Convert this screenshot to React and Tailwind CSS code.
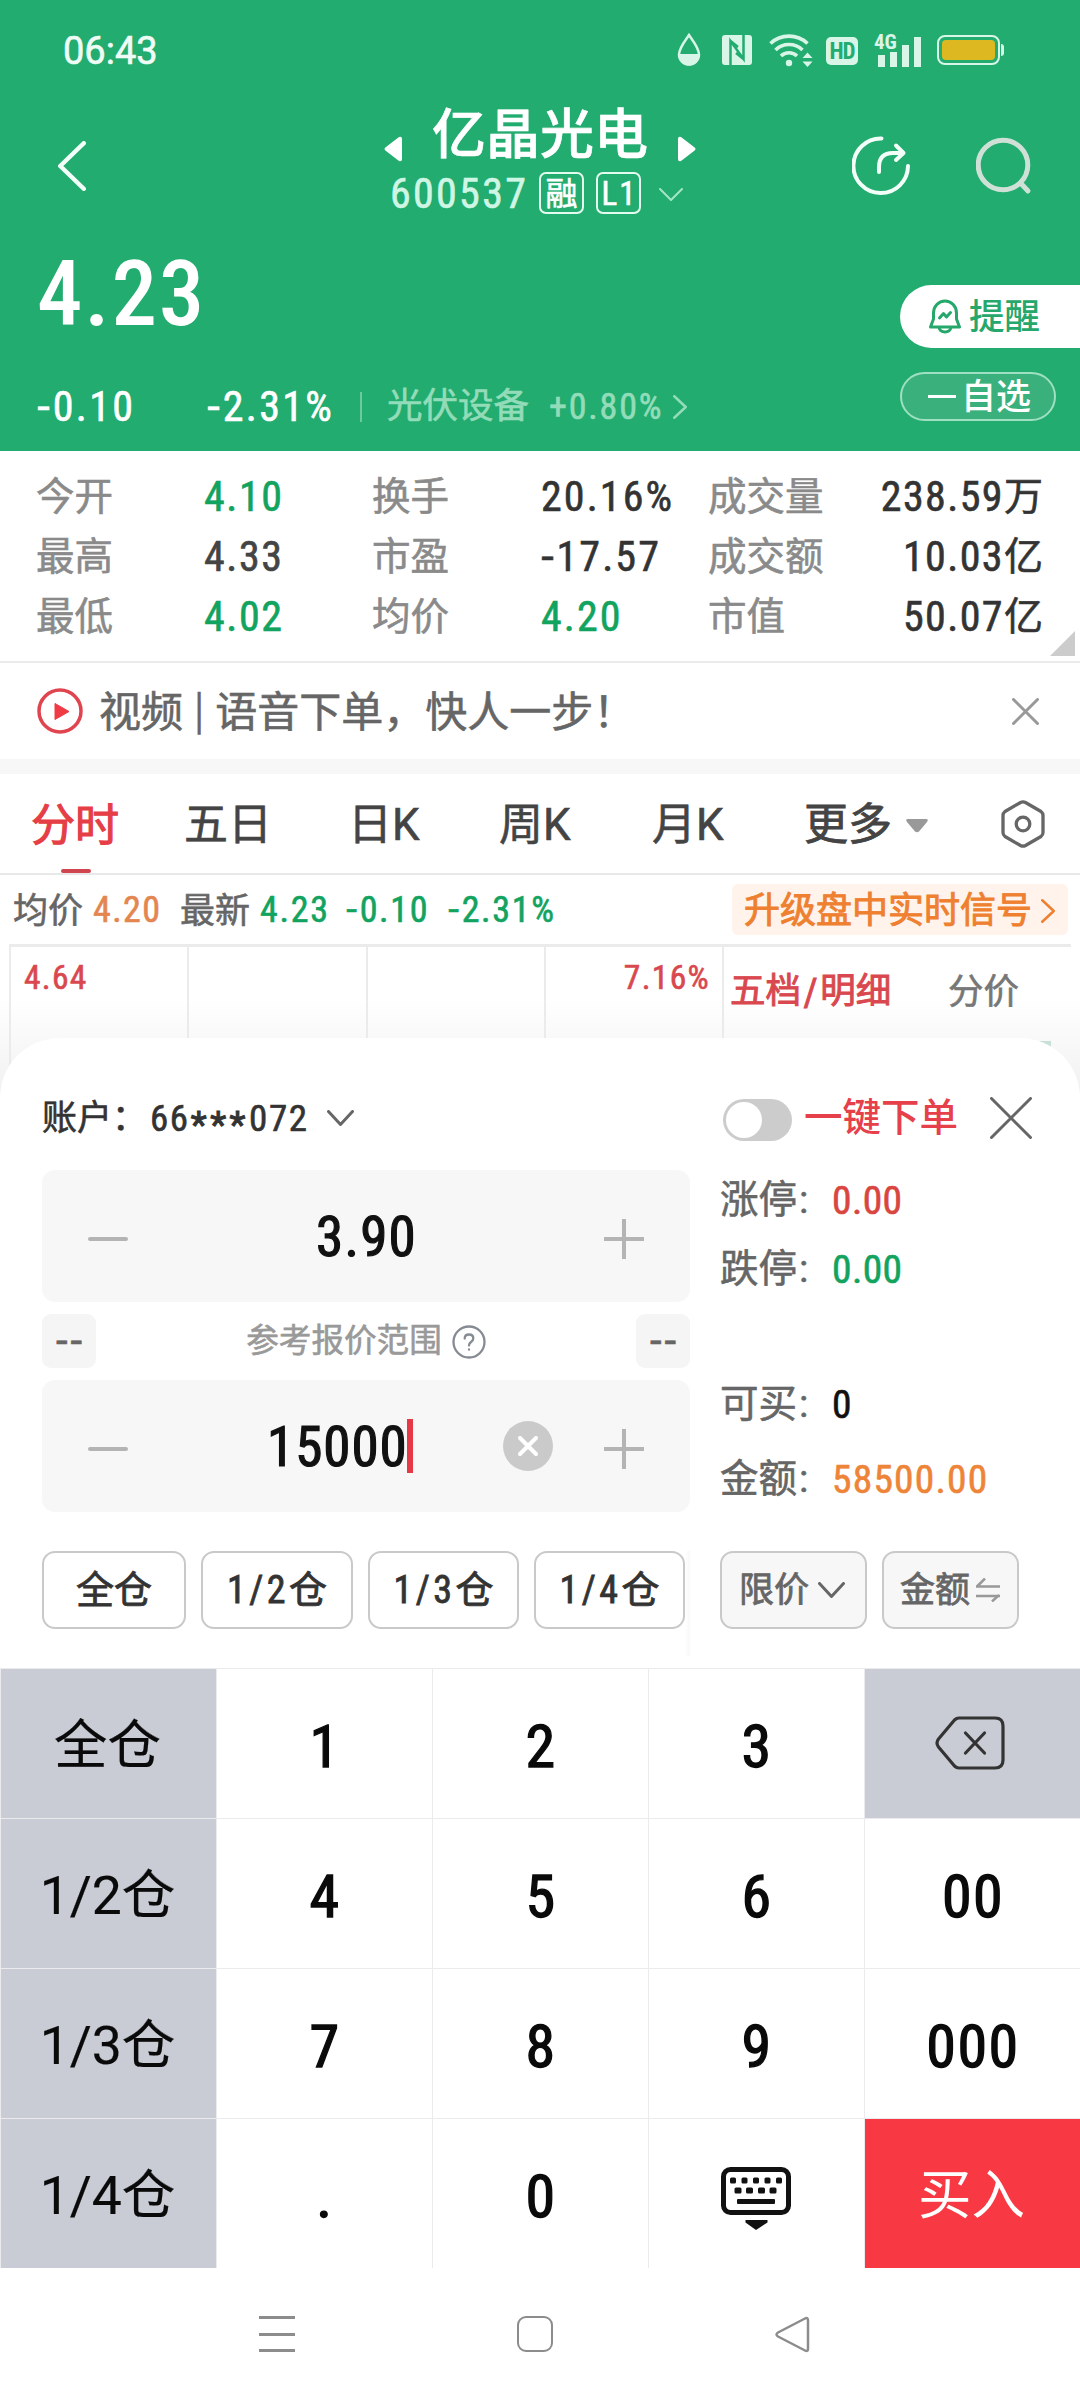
import React from "react";

const BASE = "font-['Roboto','Noto_Sans_CJK_SC',sans-serif] [font-stretch:85%] [-webkit-text-stroke:0.6px]";

function Chevron({ dir = "down", w, h, stroke, sw = 3, className = "" }) {
  const d = {
    down: `M${sw / 2} ${sw / 2}L${w / 2} ${h - sw / 2}L${w - sw / 2} ${sw / 2}`,
    right: `M${sw / 2} ${sw / 2}L${w - sw / 2} ${h / 2}L${sw / 2} ${h - sw / 2}`,
    left: `M${w - sw / 2} ${sw / 2}L${sw / 2} ${h / 2}L${w - sw / 2} ${h - sw / 2}`,
  }[dir];
  return (
    <svg className={`shrink-0 ${className}`} width={w} height={h} fill="none" stroke={stroke} strokeWidth={sw} strokeLinecap="round" strokeLinejoin="round">
      <path d={d} />
    </svg>
  );
}

function Cross({ size, stroke, sw, className = "" }) {
  return (
    <svg className={`shrink-0 ${className}`} width={size} height={size} stroke={stroke} strokeWidth={sw} strokeLinecap="round">
      <path d={`M${sw / 2} ${sw / 2}L${size - sw / 2} ${size - sw / 2}M${size - sw / 2} ${sw / 2}L${sw / 2} ${size - sw / 2}`} />
    </svg>
  );
}

// Wide leading minus followed by the digits of a negative figure.
function Signed({ children }) {
  if (children[0] !== "-") return children;
  return <><span className="mr-[3px] inline-block origin-left scale-x-[1.25]">-</span>{children.slice(1)}</>;
}

function StatusBar() {
  return (
    <div className="flex h-[100px] items-center pl-[63px] pr-[76px] text-[#d8f5e8]">
      <span className="pt-[2px] text-[38px] leading-none text-[#effcf6] [font-stretch:100%]">06:43</span>
      <svg className="ml-auto" width="24" height="34" viewBox="0 0 24 34">
        <path d="M12 2C8 8 2 15 2 21.500A10 10 0 0 0 22 21.500C22 15 16 8 12 2Z" fill="none" stroke="currentColor" strokeWidth="2.500" />
        <path d="M1.500 21H22.500A10.500 11.500 0 0 1 1.500 21Z" fill="currentColor" />
      </svg>
      <svg className="ml-[21px]" width="30" height="30" viewBox="0 0 30 30">
        <rect width="30" height="30" rx="3" fill="currentColor" />
        <path d="M8.500 30V6L21.500 24V0M8.500 6L16 12M21.500 24L14 18" fill="none" stroke="#22ac6f" strokeWidth="2.500" />
      </svg>
      <svg className="ml-[17px]" width="44" height="34" viewBox="0 0 44 34" fill="none" stroke="currentColor" strokeWidth="3.600">
        <path d="M1.500 10.500A27 27 0 0 1 38.500 10.500" />
        <path d="M6.500 17A19.500 19.500 0 0 1 33.500 17" />
        <path d="M12 23A11.500 11.500 0 0 1 28 23" />
        <circle cx="20" cy="30" r="3.200" fill="currentColor" stroke="none" />
        <path d="M33.500 25L38.500 19.500L43.500 25ZM33.500 28.500L38.500 34L43.500 28.500Z" fill="currentColor" stroke="none" />
      </svg>
      <div className="ml-[13px] mt-[2px] flex h-[28px] w-[32px] items-center justify-center rounded-[5px] bg-[#d8f5e8] pt-px text-[23px] font-bold leading-none tracking-[-1px] text-[#22ac6f] [-webkit-text-stroke:0]">HD</div>
      <div className="relative ml-[17px] flex h-[33px] w-[47px] items-end gap-[5.500px] pl-[3px]">
        <span className="absolute -left-[1px] -top-[2px] text-[21px] font-bold leading-none [-webkit-text-stroke:0]">4G</span>
        <i className="h-[12px] w-[6.500px] bg-current" />
        <i className="h-[15px] w-[6.500px] bg-current" />
        <i className="h-[22px] w-[6.500px] bg-current" />
        <i className="h-[30px] w-[6.500px] bg-current" />
      </div>
      <div className="ml-[15px] h-[30px] w-[63px] rounded-[8px] border-2 border-current p-[3px]">
        <div className="h-full w-full rounded-[4px] bg-[#deb820]" />
      </div>
      <i className="ml-px h-[12px] w-[3px] rounded-r-sm bg-current" />
    </div>
  );
}

function Header() {
  return (
    <header className="h-[451px] bg-[#22ac6f] text-white">
      <StatusBar />
      <div className="flex h-[132px]">
        <Chevron dir="left" w={28} h={50} sw={4.500} stroke="#f3fff9" className="ml-[58px] mt-[41px]" />
        <div className="ml-[298px] flex w-[312px] flex-col">
          <div className="flex h-[70px] items-center">
            <svg className="mt-[28px]" width="18" height="26"><path d="M2 11L15 1Q18 0 18 3V23Q18 26 15 25L2 15Q-1 13 2 11Z" fill="#fff" /></svg>
            <h1 className="ml-[30px] w-[216px] whitespace-nowrap pt-[2px] text-[54px] font-medium leading-none">亿晶光电</h1>
            <svg className="ml-[30px] mt-[28px]" width="18" height="26"><path d="M16 11L3 1Q0 0 0 3V23Q0 26 3 25L16 15Q19 13 16 11Z" fill="#fff" /></svg>
          </div>
          <div className="mt-[2px] flex h-[42px] items-center">
            <span className="ml-[6px] w-[149px] pt-[2px] text-[42px] leading-none tracking-[2.300px] text-[#cff6e4]">600537</span>
            <span className="flex h-[42px] w-[45px] items-center justify-center rounded-[7px] border-2 border-[#e4fbf0] pt-px text-[32px] leading-none">融</span>
            <span className="ml-[12px] flex h-[42px] w-[45px] items-center justify-center rounded-[7px] border-2 border-[#e4fbf0] pl-[2px] text-[33px] leading-none tracking-[2px]">L1</span>
            <Chevron w={24} h={13} sw={2} stroke="#a5e5c7" className="ml-[18px] mt-0.5" />
          </div>
        </div>
        <svg className="ml-[156px] mt-[36px]" width="60" height="60" fill="none" stroke="#f3fff9" strokeWidth="4" strokeLinecap="round" strokeLinejoin="round">
          <path d="M29.500 2.500A27.300 27.300 0 1 0 56 30" />
          <path d="M27 36V31Q27 17 41 17H50M44 9.500L51.500 17L44 24" />
        </svg>
        <svg className="ml-[64px] mt-[37px]" width="56" height="58" fill="none" stroke="#cfe0d6" strokeWidth="5" strokeLinecap="round">
          <circle cx="27" cy="28" r="24.800" />
          <path d="M45 46.500L52 54" />
        </svg>
      </div>
      <div className="flex h-[219px]">
        <div className="w-[900px] pl-[37px]">
          <div className="flex h-[122px] items-center pt-[3px] text-[91px] font-medium leading-none tracking-[1.800px] [-webkit-text-stroke:0]">4.23</div>
          <div className="mt-[22px] flex h-[60px] items-center pt-[2px] text-[42px] leading-none tracking-[2.300px]">
            <span className="w-[170px]"><Signed>-0.10</Signed></span>
            <span className="w-[153px]"><Signed>-2.31%</Signed></span>
            <i className="h-[30px] w-[2px] bg-[#6cc9a0]" />
            <span className="ml-[25px] w-[162px] text-[35.500px] tracking-normal text-[#93dcb9]">光伏设备</span>
            <span className="text-[36px] tracking-[1.800px] text-[#93dcb9]">+0.80%</span>
            <Chevron dir="right" w={14} h={24} sw={2.500} stroke="#93dcb9" className="ml-auto mr-[213px]" />
          </div>
        </div>
        <div className="flex w-[180px] flex-col pt-[53px]">
          <div className="flex h-[63px] items-center rounded-l-full bg-white pl-[29px] text-[#26a76b]">
            <svg width="32" height="35" fill="none" stroke="currentColor" strokeWidth="3" strokeLinejoin="round" strokeLinecap="round">
              <path d="M4.500 20V14A11.500 12 0 0 1 27.500 14V20L30.500 28H1.500Z" />
              <path d="M10 28.500Q11 33 16 33Q21 33 22 28.500M10.500 19L14.500 14.500L17.500 18L21.500 13.500" />
            </svg>
            <span className="ml-[8px] pt-[2px] text-[35.500px] font-medium leading-none [-webkit-text-stroke:0]">提醒</span>
          </div>
          <div className="mt-[24px] flex h-[49px] w-[156px] items-center rounded-full border-2 border-[#9fdfc2] bg-[#3ab17c] pl-[26px]">
            <i className="h-[3.500px] w-[28px] bg-white" />
            <span className="ml-[5px] pt-[2px] text-[35px] font-medium leading-none [-webkit-text-stroke:0]">自选</span>
          </div>
        </div>
      </div>
    </header>
  );
}

const STATS = [
  ["今开", "4.10", "text-[#12a35f]", "换手", "20.16%", "text-[#333]", "成交量", "238.59万"],
  ["最高", "4.33", "text-[#444]", "市盈", "-17.57", "text-[#333]", "成交额", "10.03亿"],
  ["最低", "4.02", "text-[#12a35f]", "均价", "4.20", "text-[#12a35f]", "市值", "50.07亿"],
];

function Stats() {
  return (
    <section className="relative h-[212px] border-b-2 border-[#ebebeb] pt-[16px]">
      {STATS.map((r) => (
        <div key={r[0]} className="flex h-[60px] items-center pl-[36px] pr-[37px] text-[38.500px] leading-none">
          <span className="w-[168px] text-[#8a8a8a]">{r[0]}</span>
          <span className={`w-[168px] text-[42px] tracking-[1.600px] ${r[2]}`}>{r[1]}</span>
          <span className="w-[169px] text-[#8a8a8a]">{r[3]}</span>
          <span className={`w-[167px] text-[42px] tracking-[2.100px] ${r[5]}`}><Signed>{r[4]}</Signed></span>
          <span className="text-[#8a8a8a]">{r[6]}</span>
          <span className="ml-auto flex items-center text-[42px] tracking-[1.400px] text-[#333]">{r[7].slice(0, -1)}<span className="text-[39px] tracking-normal">{r[7].slice(-1)}</span></span>
        </div>
      ))}
      <svg className="absolute bottom-[5px] right-[5px]" width="25" height="25"><path d="M25 0V25H0Z" fill="#ccc" /></svg>
    </section>
  );
}

function Banner() {
  return (
    <section className="flex h-[111px] items-center border-b-[15px] border-[#f7f7f7] pl-[37px] pr-[41px]">
      <svg width="46" height="46"><circle cx="23" cy="23" r="21" fill="none" stroke="#e0454f" strokeWidth="3.500" /><path d="M18 15.500L32 23.500L18 31.500Z" fill="#f03a45" stroke="#f03a45" strokeWidth="1" strokeLinejoin="round" /></svg>
      <span className="-mt-[4px] ml-[16px] flex items-center font-['Noto_Sans_CJK_SC',sans-serif] text-[42px] leading-none text-[#666]">
        视频<span className="mx-[11px] -mt-[3px] text-[38px]">|</span>语音下单，快人一步！
      </span>
      <Cross size={27} sw={3} stroke="#999" className="ml-auto" />
    </section>
  );
}

const TABS = [
  ["五日", "w-[164px]"],
  ["日K", "w-[151px]"],
  ["周K", "w-[153px]"],
  ["月K", "w-[152px]"],
];

function Tabs() {
  return (
    <nav className="flex h-[101px] items-center border-b-2 border-[#e8e8e8] pl-[31px] text-[44px] leading-none text-[#444] [font-stretch:100%]">
      <div className="flex h-full w-[153px] flex-col pt-[30px]">
        <span className="h-[65px] text-[#e63e46] [-webkit-text-stroke:1.200px]">分时</span>
        <i className="ml-[30px] h-[4px] w-[30px] rounded-full bg-[#cf4650]" />
      </div>
      {TABS.map(([t, w]) => <span key={t} className={`pt-[3px] ${w}`}>{t}</span>)}
      <span className="pt-[3px] [-webkit-text-stroke:0.800px]">更多</span>
      <svg className="ml-[14px] mt-1" width="22" height="14"><path d="M2 0H20Q23 0 21 3L13 12.500Q11 14 9 12.500L1 3Q-1 0 2 0Z" fill="#999" /></svg>
      <svg className="ml-[73px]" width="44" height="48" fill="none" stroke="#666" strokeWidth="3.300" strokeLinejoin="round">
        <path d="M19.500 2.500Q22 1.200 24.500 2.500L40 11.500Q42 13 42 15.500V32.500Q42 35 40 36.500L24.500 45.500Q22 46.800 19.500 45.500L4 36.500Q2 35 2 32.500V15.500Q2 13 4 11.500Z" />
        <circle cx="22" cy="24" r="6.800" />
      </svg>
    </nav>
  );
}

function Chart() {
  return (
    <section className="h-[225px] bg-linear-to-b from-white from-55% to-[#f0f0f0]">
      <div className="flex h-[69px] items-center pl-[13px] text-[35px] leading-none text-[#666]">
        <span className="w-[80px] pt-[3px]">均价</span>
        <span className="w-[87px] pt-px text-[36px] tracking-[1.400px] text-[#e38650]">4.20</span>
        <span className="w-[80px] pt-[3px]">最新</span>
        <span className="flex w-[472px] pt-px text-[36px] tracking-[1.700px] text-[#12a35f]">
          <span className="w-[86px]">4.23</span><span className="w-[102px]"><Signed>-0.10</Signed></span><span><Signed>-2.31%</Signed></span>
        </span>
        <span className="flex h-[51px] w-[336px] items-center rounded-[6px] bg-[#fff3eb] pl-[12px] pt-[2px] text-[36px] text-[#ee8030] [-webkit-text-stroke:0.900px]">
          升级盘中实时信号<Chevron dir="right" w={14} h={24} sw={2.500} stroke="#ee8030" className="ml-[9px]" />
        </span>
      </div>
      <div className="ml-[9px] flex h-[156px] w-[1062px] border-l-2 border-t-[3px] border-[#ebebeb] text-[33.500px] leading-none text-[#d9474f]">
        <div className="w-[178px] border-r-2 border-[#ebebeb] pl-[13px] pt-[14px] tracking-[1.300px]">4.64</div>
        <div className="w-[179px] border-r-2 border-[#ebebeb]" />
        <div className="w-[178px] border-r-2 border-[#ebebeb]" />
        <div className="w-[178px] border-r-2 border-[#ebebeb] pr-[12px] pt-[14px] text-right tracking-[1.300px]">7.16%</div>
        <div className="flex h-[90px] items-center pl-[6px] pt-[2px] text-[35.500px]">
          <span className="flex w-[218px] [-webkit-text-stroke:0.900px]">五档<span className="px-[2.500px] text-[38px]">/</span>明细</span>
          <span className="text-[#777]">分价</span>
        </div>
        <i className="-ml-[8px] mt-[94px] h-[8px] w-[40px] bg-[#c8e0d8]" />
      </div>
    </section>
  );
}

function Minus() {
  return <i className="mt-[5px] h-[4px] w-[40px] rounded-full bg-[#b4b4b4]" />;
}
function Plus() {
  return <svg className="mt-[6px]" width="40" height="40" stroke="#b4b4b4" strokeWidth="4"><path d="M0 20H40M20 0V40" /></svg>;
}

function InfoRow({ label, value, color, className }) {
  return (
    <div className={`flex items-center pt-px text-[38.500px] leading-none text-[#666] ${className}`}>
      <span className="flex w-[112px]">{label}<span className="ml-[2px]">:</span></span>
      <span className={`pt-px text-[39.500px] ${color}`}>{value}</span>
    </div>
  );
}

function RangeBound() {
  return <span className="flex h-[54px] w-[54px] items-center justify-center rounded-[9px] bg-[#f5f5f5] pl-[3px] text-[42px] leading-none tracking-[3px] text-[#666] [font-stretch:100%]">--</span>;
}

function OrderForm() {
  return (
    <section className="relative -mt-[62px] h-[630px] rounded-t-[60px] bg-white">
      <div className="flex h-[132px] items-center pl-[42px] pt-[28px] leading-none">
        <span className="w-[108px] pt-px text-[35px] text-[#333]">账户：</span>
        <span className="flex w-[177px] whitespace-nowrap text-[37px] tracking-[1.600px] text-[#333]">66<span className="relative top-[6px] ml-px tracking-[3.500px] [-webkit-text-stroke:1px]">***</span>072</span>
        <Chevron w={27} h={16} sw={3} stroke="#666" />
        <div className="ml-[369px] mt-[4px] flex h-[42px] w-[69px] items-center rounded-full bg-[#ccc] pl-[3px]"><i className="h-[36px] w-[36px] rounded-full bg-white" /></div>
        <span className="ml-[12px] pt-px text-[38.500px] font-medium text-[#e6404a] [-webkit-text-stroke:0]">一键下单</span>
        <Cross size={42} sw={3} stroke="#666" className="ml-[32px]" />
      </div>
      <div className="flex">
        <div className="ml-[42px] w-[648px]">
          <div className="flex h-[132px] items-center justify-between rounded-[13px] bg-[#f7f7f7] pl-[46px] pr-[46px]">
            <Minus />
            <span className="pl-px pt-[2px] text-[55px] leading-none tracking-[1.200px] text-[#111] [-webkit-text-stroke:1.200px]">3.90</span>
            <Plus />
          </div>
          <div className="my-[12px] flex h-[54px] items-center justify-between text-[#999]">
            <RangeBound />
            <span className="flex items-center pt-px text-[32.600px] leading-none">参考报价范围
              <svg className="ml-[10px]" width="34" height="34" fill="none" stroke="#868b93" strokeWidth="2.300" strokeLinecap="round">
                <circle cx="17" cy="17" r="15.500" /><path d="M12.700 13.500Q12.700 9.500 17 9.500Q21.300 9.500 21.300 13.200Q21.300 15.500 19 17Q17 18.500 17 20.500M17 24.500V24.700" />
              </svg>
            </span>
            <RangeBound />
          </div>
          <div className="flex h-[132px] items-center rounded-[13px] bg-[#f7f7f7] pl-[46px] pr-[46px]">
            <Minus />
            <span className="ml-[139px] w-[140px] pt-[2px] text-[55px] leading-none tracking-[1px] text-[#111] [-webkit-text-stroke:1.200px]">15000</span>
            <i className="h-[54px] w-[6px] bg-[#e63946]" />
            <span className="ml-auto mr-[51px] flex h-[50px] w-[50px] items-center justify-center rounded-full bg-[#cacaca]"><Cross size={20} sw={4} stroke="#fff" /></span>
            <Plus />
          </div>
        </div>
        <div className="ml-[30px] flex flex-col">
          <InfoRow label="涨停" value="0.00" color="tracking-[0.400px] text-[#d9453f]" className="h-[60px]" />
          <InfoRow label="跌停" value="0.00" color="tracking-[0.400px] text-[#12a35f]" className="mt-[9px] h-[60px]" />
          <InfoRow label="可买" value="0" color="text-[#111]" className="mt-[75px] h-[60px]" />
          <InfoRow label="金额" value="58500.00" color="tracking-[1.200px] text-[#ee8438]" className="mt-[15px] h-[60px]" />
        </div>
      </div>
      <div className="mt-[39px] flex h-[78px] pl-[42px] text-[38px] leading-none text-[#333] [-webkit-text-stroke:0.800px]">
        <span className="flex w-[144px] items-center justify-center rounded-[13px] border-2 border-[#c9c9c9]">全仓</span>
        <span className="ml-[15px] flex w-[152px] items-center justify-center rounded-[13px] border-2 border-[#c9c9c9]"><span className="tracking-[3.500px]">1/2</span>仓</span>
        <span className="ml-[15px] flex w-[151px] items-center justify-center rounded-[13px] border-2 border-[#c9c9c9]"><span className="tracking-[3.500px]">1/3</span>仓</span>
        <span className="ml-[15px] flex w-[151px] items-center justify-center rounded-[13px] border-2 border-[#c9c9c9]"><span className="tracking-[3.500px]">1/4</span>仓</span>
        <i className="h-[105px] w-[5px] bg-linear-to-r from-white to-[#f8f8f8]" />
        <span className="ml-[30px] flex w-[147px] items-center rounded-[13px] border-2 border-[#c9c9c9] bg-[#f7f7f7] pl-[17px] text-[35px] text-[#666]">限价<Chevron w={27} h={16} sw={3} stroke="#666" className="ml-[9px]" /></span>
        <span className="ml-[15px] flex w-[137px] items-center rounded-[13px] border-2 border-[#c9c9c9] bg-[#f7f7f7] pl-[16px] text-[35px] text-[#666]">金额
          <svg className="ml-[6px]" width="24" height="24" fill="none" stroke="#999" strokeWidth="2.500"><path d="M0 8.500H24M1 8.500L9 0.500M0 18H24M23 17L16 23.500" /></svg>
        </span>
      </div>
    </section>
  );
}

const Backspace = () => (
  <svg className="-ml-[6px] -mt-[2px]" width="70" height="54" fill="none" stroke="#333" strokeWidth="3.200" strokeLinejoin="round" strokeLinecap="round">
    <path d="M19.500 4Q21.500 2 24 2H60Q68 2 68 10V44Q68 52 60 52H24Q21.500 52 19.500 50L3.500 31Q0.500 27 3.500 23Z" />
    <path d="M30.500 17L49.500 37M49.500 17L30.500 37" />
  </svg>
);

const Keyboard = () => (
  <svg className="-ml-[2px] mt-[4px]" width="70" height="64" viewBox="0 0 70 64">
    <rect x="2.500" y="2.500" width="65" height="43" rx="7" fill="none" stroke="#111" strokeWidth="5" />
    {[9, 20.500, 32, 43.500, 55].map((x) => <rect key={x} x={x} y="10.500" width="6" height="6" rx="1.500" fill="#111" />)}
    {[13.500, 25, 37, 48.500].map((x) => <rect key={x} x={x} y="20.500" width="7" height="6" rx="1.500" fill="#111" />)}
    <rect x="16" y="32" width="38" height="5" rx="1" fill="#111" />
    <path d="M24.500 53H46.500V55.500L35 63L24.500 55.500Z" fill="#111" />
  </svg>
);

const KEYS = [
  "全仓", "1", "2", "3", <Backspace key="b" />,
  "1/2仓", "4", "5", "6", "00",
  "1/3仓", "7", "8", "9", "000",
  "1/4仓", ".", "0", <Keyboard key="k" />, "买入",
];

function keyStyle(i) {
  if (i === 19) return "bg-[#f83842] text-white text-[53.500px] pt-[5px] pr-[2px] [-webkit-text-stroke:0]";
  if (i % 5 === 0) return "bg-[#c9ccd5] text-[#0a0a0a] text-[53.500px] pt-[4px] pr-[2px] [font-stretch:100%] [-webkit-text-stroke:0.200px]";
  if (i === 4) return "bg-[#c9ccd5]";
  return "text-[#0a0a0a] text-[60px] pt-[6px] pl-px tracking-[1.500px] [-webkit-text-stroke:1.300px]";
}

export default function App() {
  return (
    <div className={`flex h-[2400px] w-[1080px] flex-col overflow-hidden bg-white ${BASE}`}>
      <Header />
      <Stats />
      <Banner />
      <Tabs />
      <Chart />
      <OrderForm />
      <div className="grid h-[600px] grid-cols-5 grid-rows-4">
        {KEYS.map((k, i) => (
          <div key={i} className={`flex items-center justify-center border-l border-t border-[#ebebed] leading-none ${keyStyle(i)}`}>{k}</div>
        ))}
      </div>
      <div className="flex h-[132px] items-center pl-[259px]">
        <div className="flex h-[36px] w-[36px] flex-col justify-between"><i className="h-[3px] bg-[#8c8c8c]" /><i className="h-[3px] bg-[#8c8c8c]" /><i className="h-[3px] bg-[#8c8c8c]" /></div>
        <i className="ml-[222px] h-[36px] w-[36px] rounded-[9px] border-[2.500px] border-[#8c8c8c]" />
        <svg className="ml-[222px]" width="35" height="37" fill="none" stroke="#8c8c8c" strokeWidth="2.500" strokeLinejoin="round"><path d="M3 16.500L30 2.500Q33 1 33 4.500V32.500Q33 36 30 34.500L3 20.500Q0 18.500 3 16.500Z" /></svg>
      </div>
    </div>
  );
}
